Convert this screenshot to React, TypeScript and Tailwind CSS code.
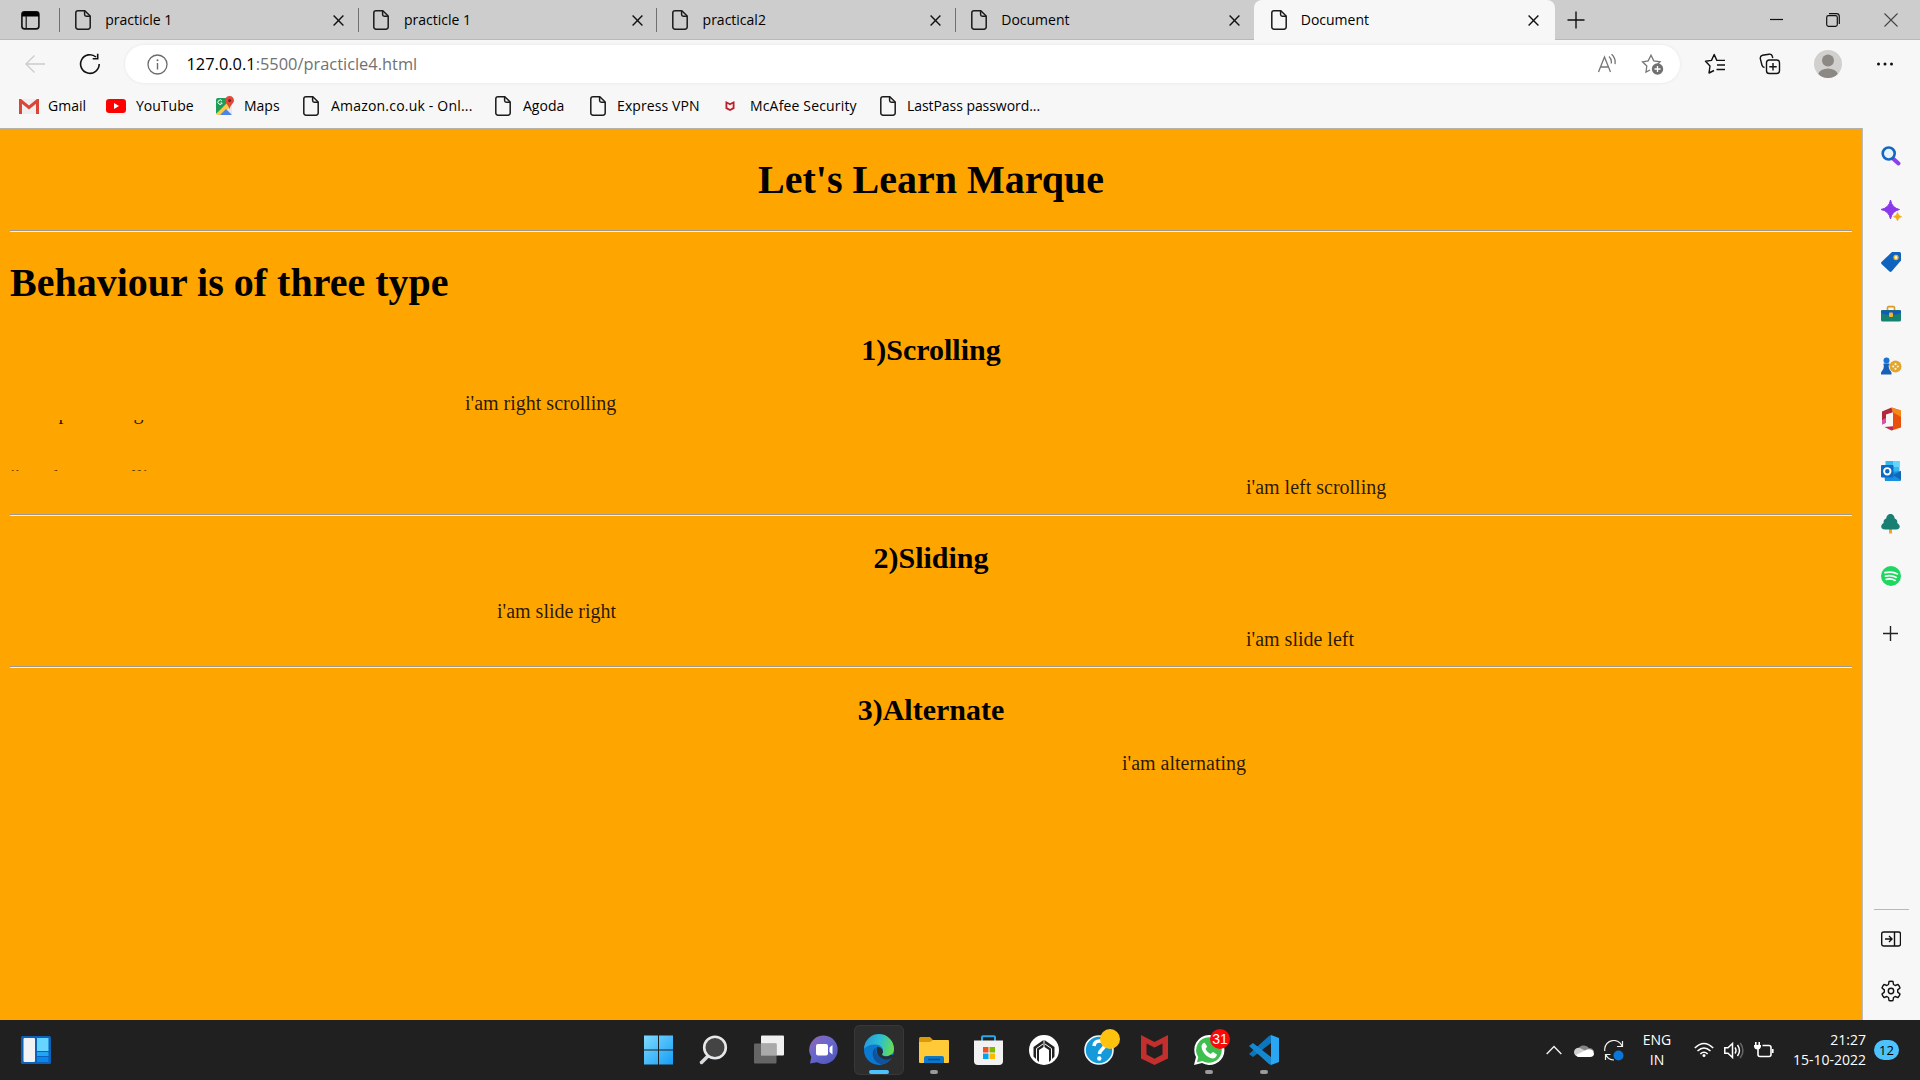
import React from "react";

type SvgProps = { size?: number; children: React.ReactNode; box?: string; className?: string };

const Svg = ({ size = 20, box = "0 0 20 20", children, className = "" }: SvgProps) => (
  <svg width={size} height={size} viewBox={box} fill="none" className={"shrink-0 " + className}>
    {children}
  </svg>
);

const PageIcon = () => (
  <svg width="16" height="20" viewBox="0 0 16 20" fill="none" stroke="#1b1b1b" strokeWidth="1.5" className="shrink-0">
    <path d="M3 .8h6.8L15.2 6v11a2.2 2.2 0 0 1-2.2 2.2H3A2.2 2.2 0 0 1 .8 17V3A2.2 2.2 0 0 1 3 .8Z" />
    <path d="M9.6 1v3.6c0 1 .7 1.7 1.7 1.7H15" />
  </svg>
);

const CloseIcon = () => (
  <svg width="11" height="11" viewBox="0 0 11 11" stroke="#111" strokeWidth="1.4" className="shrink-0">
    <path d="M.6.6l9.8 9.8M10.4.6L.6 10.4" />
  </svg>
);

const tabs = ["practicle 1", "practicle 1", "practical2", "Document"];

const TabStrip = () => (
  <div className="flex h-10 bg-[#cdcdcd] shadow-[inset_0_-1px_0_#b9b9b9]">
    <div className="flex w-[59px] items-center pl-[21px]">
      <Svg size={19} box="0 0 19 19">
        <rect x=".9" y=".9" width="17" height="17" rx="2.6" stroke="#111" strokeWidth="1.6" />
        <path d="M1 5.5V3.4A2.5 2.5 0 0 1 3.4 1h12.2A2.5 2.5 0 0 1 18 3.4v2.1Z" fill="#000" />
        <path d="M5.2 5v12.5" stroke="#222" strokeWidth="1.3" />
      </Svg>
    </div>
    {tabs.map((t, i) => (
      <div key={i} className="flex w-[298.7px] items-center">
        <div className="h-6 w-px bg-[#707070]" />
        <div className="ml-[14.7px]"><PageIcon /></div>
        <span className="ml-[14.5px] flex-1 text-sm leading-none">{t}</span>
        <div className="mr-[13.7px] mt-px"><CloseIcon /></div>
      </div>
    ))}
    <div className="flex w-[301px] items-center rounded-t-lg bg-[#f7f7f7] pl-[17px]">
      <PageIcon />
      <span className="ml-[14px] flex-1 text-sm leading-none">Document</span>
      <div className="mr-[16px] mt-px"><CloseIcon /></div>
    </div>
    <div className="flex flex-1 items-center pb-px">
      <Svg size={18} box="0 0 18 18" className="ml-[12px]">
        <path d="M9 .5v17M.5 9h17" stroke="#111" strokeWidth="1.4" />
      </Svg>
      <div className="flex-1" />
      <Svg size={13} box="0 0 13 13" className="mr-[43.5px]"><path d="M0 6.5h13" stroke="#111" strokeWidth="1.2" /></Svg>
      <Svg size={14} box="0 0 14 14" className="mr-[44px]">
        <rect x=".7" y="2.7" width="10.6" height="10.6" rx="1.8" stroke="#111" strokeWidth="1.2" />
        <path d="M3 .7h7.5a2.8 2.8 0 0 1 2.8 2.8V11" stroke="#111" strokeWidth="1.2" />
      </Svg>
      <Svg size={14} box="0 0 14 14" className="mr-[22px]"><path d="M.5.5l13 13M13.5.5l-13 13" stroke="#444" strokeWidth="1.1" /></Svg>
    </div>
  </div>
);

const AddressBar = () => (
  <div className="flex h-[48px] items-center">
    <Svg size={20} className="ml-[25px]"><path d="M20 10H1M9.500 1.500L1 10l8.500 8.500" stroke="#cbcbcb" strokeWidth="1.300" /></Svg>
    <Svg size={22} box="0 0 22 22" className="ml-[34px]">
      <path d="M20.200 11a9.300 9.300 0 1 1-3.200-7" stroke="#111" strokeWidth="1.600" />
      <path d="M18.700.800v5h-5" stroke="#111" strokeWidth="1.600" />
    </Svg>
    <div className="ml-[24px] flex h-[38px] w-[1555px] items-center rounded-full bg-white shadow-[0_0_3px_#e3e3e3]">
      <Svg size={21} box="0 0 21 21" className="ml-[22px]">
        <circle cx="10.500" cy="10.500" r="9.500" stroke="#6b6b6b" strokeWidth="1.300" />
        <path d="M10.500 9v6.500" stroke="#6b6b6b" strokeWidth="1.400" />
        <circle cx="10.500" cy="6.200" r="1" fill="#6b6b6b" />
      </Svg>
      <span className="ml-[18.5px] flex-1 text-[16.4px] leading-none text-[#717171]">
        <span className="text-black">127.0.0.1</span>:5500/practicle4.html
      </span>
      <Svg size={21} box="0 0 21 21" className="mr-[23px]">
        <path d="M1.500 18L7.500 3l6 15M3.500 13h8" stroke="#767676" strokeWidth="1.300" />
        <path d="M12 2.500q3 2.800 2.200 7M14.500 .200q4.500 4 3.500 10" stroke="#767676" strokeWidth="1.300" />
      </Svg>
      <Svg size={23} box="0 0 23 23" className="mr-[16px]">
        <path d="M9 17l-4 2 .8-6L1.500 8.800l5.700-1L10 2.200l2.800 5.600 6.200 1-2 2" stroke="#767676" strokeWidth="1.300" />
        <circle cx="16.500" cy="16" r="5.700" fill="#707070" />
        <path d="M16.500 13v6M13.500 16h6" stroke="#fff" strokeWidth="1.300" />
      </Svg>
    </div>
    <Svg size={22} box="0 0 22 22" className="ml-[24px]">
      <path d="M10 17.500L5 20l1-7L1.500 8.300l6-.900L10.200 1.500l2.600 5.900H21M13 12H21M12.500 16.500h8.500" stroke="#111" strokeWidth="1.400" strokeLinejoin="round" />
    </Svg>
    <Svg size={22} box="0 0 22 22" className="ml-[33px]">
      <path d="M5.500 14.500A3 3 0 0 1 3 12.300L1.300 5.600A3 3 0 0 1 3.500 2.300L10 1.200a3 3 0 0 1 3.400 2.300l.4 1.500" stroke="#111" strokeWidth="1.400" />
      <rect x="7.500" y="7" width="13" height="13.500" rx="2.800" stroke="#111" strokeWidth="1.400" />
      <path d="M14 10v7.500M10.300 13.700h7.400" stroke="#111" strokeWidth="1.400" />
    </Svg>
    <Svg size={28} box="0 0 28 28" className="ml-[33px]">
      <circle cx="14" cy="14" r="14" fill="#d2d0ce" />
      <circle cx="14" cy="10.500" r="6" fill="#8c8985" />
      <path d="M4.200 24a10 7 0 0 1 19.600 0 14 14 0 0 1-19.600 0Z" fill="#8c8985" />
    </Svg>
    <Svg size={18} box="0 0 18 18" className="ml-[34px]">
      <g fill="#111"><circle cx="2.500" cy="9" r="1.500" /><circle cx="9" cy="9" r="1.500" /><circle cx="15.500" cy="9" r="1.500" /></g>
    </Svg>
  </div>
);

const Gmail = () => (
  <svg width="20" height="15" viewBox="0 0 20 15" className="shrink-0">
    <path d="M2 0h16v15H2Z" fill="#eee" />
    <path d="M1.500 15V1.500L10 8.500l8.500-7V15" fill="none" stroke="#d94537" strokeWidth="3" />
  </svg>
);
const YouTube = () => (
  <svg width="20" height="16" viewBox="0 0 20 16" className="shrink-0">
    <rect y="1" width="20" height="14" rx="3.200" fill="#f00" /><path d="M8 5v6l5-3Z" fill="#fff" />
  </svg>
);
const Maps = () => (
  <svg width="20" height="20" viewBox="0 0 20 20" className="shrink-0">
    <rect x="1" y="2" width="16" height="17" rx="2" fill="#e8e8e8" />
    <path d="M1 4a2 2 0 0 1 2-2h10v6L1 18Z" fill="#1f9d58" />
    <path d="M1 18L12 7l3 4-8 8H3Z" fill="#fbcb43" />
    <path d="M5 19l6-6 6 6Z" fill="#4a85ee" />
    <path d="M14.500 0A4.300 4.300 0 0 0 10.200 4.500c0 3 3.500 4 4.300 9 .8-5 4.500-6 4.500-9A4.400 4.400 0 0 0 14.500 0Z" fill="#e04a3c" />
    <circle cx="14.600" cy="4.400" r="1.500" fill="#7b231b" />
    <path d="M7 5a2.200 2.200 0 1 0 .2 2H5.500" fill="none" stroke="#fff" strokeWidth="1" />
  </svg>
);
const Shield = ({ w, h, color }: { w: number; h: number; color: string }) => (
  <svg width={w} height={h} viewBox="0 0 27 30" className="shrink-0">
    <path d="M0 0L13.500 7 27 0V23.500L13.500 30 0 23.500ZM5.500 8.500V19.500L13.500 23.800 21.500 19.500V8.500L13.500 12.500Z" fill={color} fillRule="evenodd" />
  </svg>
);

const bookmarks = [
  { label: "Gmail", icon: <Gmail />, cls: "w-[87px]", gap: "ml-[9px]" },
  { label: "YouTube", icon: <YouTube />, cls: "w-[109px]", gap: "ml-[10px]" },
  { label: "Maps", icon: <Maps />, cls: "w-[88px]", gap: "ml-[9px]" },
  { label: "Amazon.co.uk - Onl...", icon: <PageIcon />, cls: "w-[192px]", gap: "ml-[12px] tracking-[0.2px]" },
  { label: "Agoda", icon: <PageIcon />, cls: "w-[95px]", gap: "ml-[12px]" },
  { label: "Express VPN", icon: <PageIcon />, cls: "w-[135px]", gap: "ml-[11px] tracking-[0.1px]" },
  { label: "McAfee Security", icon: <Shield w={10} h={10} color="#b8202a" />, cls: "w-[155px]", gap: "ml-[15px] tracking-[0.16px]" },
  { label: "LastPass password...", icon: <PageIcon />, cls: "w-[170px]", gap: "ml-[11px] tracking-[-0.06px]" },
];

const Bookmarks = () => (
  <div className="flex h-[40px] items-center pb-[4px] pl-[19px]">
    {bookmarks.map((b) => (
      <div key={b.label} className={"flex shrink-0 items-center whitespace-nowrap " + b.cls}>
        {b.icon}
        <span className={"text-sm leading-none " + b.gap}>{b.label}</span>
      </div>
    ))}
  </div>
);

const Rule = () => <div className="h-[2px] border-t border-[#9a9a9a] bg-[#eeeeee]" />;

const Content = () => (
  <main className="h-[892px] w-[1862px] overflow-hidden border-t border-[#b5b0a8] bg-[#ffa500] px-[10px] font-['Liberation_Serif',serif] text-black">
    <h1 className="mt-[28px] h-[46px] text-center text-[40px] font-bold leading-[46px]">Let's Learn Marque</h1>
    <div className="mt-[27px]"><Rule /></div>
    <h1 className="mt-[28px] h-[46px] text-[40px] font-bold leading-[46px]">Behaviour is of three type</h1>
    <h2 className="mt-[27px] h-[34px] text-center text-[30px] font-bold leading-[34px]">1)Scrolling</h2>
    <div className="mt-[25px] h-[28px] pl-[455px] text-[20px] leading-[23px] text-black/85">i'am right scrolling</div>
    <div className="flex h-[51px] flex-col justify-between overflow-hidden text-[20px] leading-[23px] text-black/85">
      <div className="-mt-[19px]">i'am up scrolling</div>
      <div className="-mb-[18px] text-black/65">i'am down scrolling</div>
    </div>
    <div className="mt-[5px] h-[23px] pl-[1236px] text-[20px] leading-[23px] text-black/85">i'am left scrolling</div>
    <div className="mt-[15px]"><Rule /></div>
    <h2 className="mt-[25px] h-[34px] text-center text-[30px] font-bold leading-[34px]">2)Sliding</h2>
    <div className="mt-[25px] h-[28px] pl-[487px] text-[20px] leading-[23px] text-black/85">i'am slide right</div>
    <div className="h-[38px] pl-[1236px] text-[20px] leading-[23px] text-black/85">i'am slide left</div>
    <Rule />
    <h2 className="mt-[25px] h-[34px] text-center text-[30px] font-bold leading-[34px]">3)Alternate</h2>
    <div className="mt-[25px] pl-[1112px] text-[20px] leading-[23px] text-black/85">i'am alternating</div>
  </main>
);

const sideIcons: { h: string; el: React.ReactNode }[] = [
  { h: "h-[54px]", el: <><path d="M12.500 13l5 4.500" stroke="#8a3ff0" strokeWidth="4" strokeLinecap="round" /><circle cx="7.700" cy="7.500" r="6" fill="#e7f3fb" stroke="#1466c0" strokeWidth="2.600" /></> },
  { h: "h-[53px]", el: <><path d="M9.500 0q1.500 8 9 9.500-7.500 1.500-9 9.500-1.500-8-9.500-9.500 8-1.500 9.500-9.500Z" fill="#8b38ec" stroke="#8b38ec" /><path d="M16.500 12.500q.8 3.800 4 4.200-3.200.5-4 4-.8-3.500-4-4 3.200-.4 4-4.200Z" fill="#f3ac10" stroke="#f3ac10" strokeWidth=".8" /></> },
  { h: "h-[51px]", el: <><path d="M11 0h7.500a1.500 1.500 0 0 1 1.500 1.500V8.500L10.500 19.500a1.500 1.500 0 0 1-2 0L.500 12a1.500 1.500 0 0 1 0-2Z" fill="#0f62bd" /><circle cx="15" cy="5.500" r="2" fill="#fff" stroke="#edb72d" strokeWidth="1.300" /></> },
  { h: "h-[54px]", el: <><path d="M6.500 6V3.700A1 1 0 0 1 7.500 2.600h5a1 1 0 0 1 1 1.100V6" stroke="#d99a20" strokeWidth="1.600" /><rect y="6" width="20" height="11.500" rx="1.500" fill="#15826f" /><path d="M0 6.500h20v2.500q-4 2-10 2T0 9Z" fill="#1557ba" /><rect x="8" y="8.500" width="4" height="4.500" rx="1" fill="#f4b52c" /></> },
  { h: "h-[52px]", el: <><circle cx="14.500" cy="9.500" r="6" fill="#e4a52c" /><g fill="#fff3d2"><circle cx="12.200" cy="9.500" r="1.100" /><circle cx="16.800" cy="9.500" r="1.100" /><circle cx="14.500" cy="7.200" r="1.100" /><circle cx="14.500" cy="11.800" r="1.100" /></g><circle cx="5.500" cy="3.500" r="3" fill="#1c72d4" /><path d="M2.500 6.500h6v2H7.500q0 4 3 7v2H0v-2q3-3 3-7H2.500Z" fill="#185fb8" /></> },
  { h: "h-[52px]", el: <><path d="M10.500-1.500L1 2.500v13l4-1.800V5.500l7-2.300Z" fill="#b3293c" /><path d="M1 11v4.500l4-1.800V9Z" fill="#d952a8" /><path d="M10.500-1.500L20 1.500v17l-9.500 3L12 17.500V3.200Z" fill="#e8500c" /><path d="M10.500-1.500L20 1.500V8L12 3.200Z" fill="#f58a1a" /><path d="M3.500 18l8.500-.8v3.500l-1.500.800Z" fill="#c7264e" /></> },
  { h: "h-[52px]", el: <><rect x="4.500" y="0" width="14" height="12" fill="#35b7f1" /><rect x="12" y="0" width="6.500" height="6" fill="#64d4fa" /><path d="M3 11.500L20 10v9a1 1 0 0 1-1 1H4Z" fill="#1690df" /><path d="M20 10v9l-8-5Z" fill="#1366b5" /><rect y="4" width="12.500" height="12.500" rx="1" fill="#0d6ac4" /><circle cx="6.300" cy="10.300" r="3.200" stroke="#fff" strokeWidth="1.900" /></> },
  { h: "h-[53px]", el: <><path d="M9.500 15v4.500" stroke="#eca52b" strokeWidth="3" /><path d="M9.500 0c3 0 4 2.500 4.200 4.500 2.200.8 3 2.500 2.500 4.500 3.800 2.200 3.300 6.500-1 6.500H4C-.500 15.500-1 11 2.700 9 2.200 7 3 5.300 5.200 4.500 5.500 2.500 6.500 0 9.500 0Z" fill="#187f72" /></> },
  { h: "h-[52px]", el: <><circle cx="10" cy="10" r="10" fill="#1ed760" /><path d="M4 6.700q7-1.700 12.500 1.200M4.500 10.200q6-1.400 10.800 1.200M5.200 13.300q5-1.100 9 1.100" stroke="#fff" strokeWidth="1.700" strokeLinecap="round" /></> },
  { h: "h-[63px]", el: <path d="M9.500 2v15M2 9.500h15" stroke="#222" strokeWidth="1.400" /> },
];

const Sidebar = () => (
  <aside className="flex w-[58px] flex-col items-center border-l border-[#bdbdbd] bg-[#f7f7f7] pr-px pt-px">
    {sideIcons.map((s, i) => (
      <div key={i} className={"flex w-[20px] shrink-0 items-center justify-center " + s.h}>
        <Svg className="overflow-visible">{s.el}</Svg>
      </div>
    ))}
    <div className="flex-1" />
    <div className="h-px w-[35px] bg-[#b9b9b9]" />
    <div className="mt-[19px]">
      <Svg><rect x=".700" y="3" width="18.800" height="14" rx="2" stroke="#111" strokeWidth="1.400" /><path d="M13.500 3v14M4 10h7M8 7l3 3-3 3" stroke="#111" strokeWidth="1.400" /></Svg>
    </div>
    <div className="mt-[31px] mb-[18px]">
      <svg width="22" height="22" viewBox="0 0 22 22" fill="none" stroke="#111" strokeWidth="1.400" strokeLinejoin="round">
        <circle cx="11" cy="11" r="2.700" />
        <path d="M9 1.500Q11 .900 13 1.500L13.500 4.500 15.200 5.500 18 4.400Q19.500 6 20 8L17.700 9.900V12.100L20 14Q19.500 16 18 17.600L15.200 16.500 13.500 17.500 13 20.500Q11 21.100 9 20.500L8.500 17.500 6.800 16.500 4 17.600Q2.500 16 2 14L4.300 12.100V9.900L2 8Q2.500 6 4 4.400L6.800 5.500 8.500 4.500Z" />
      </svg>
    </div>
  </aside>
);

const S = ({ children }: { children: React.ReactNode }) => (
  <svg width="30" height="30" viewBox="0 0 30 30" fill="none" className="overflow-visible">{children}</svg>
);

const apps: { el: React.ReactNode; state?: "active" | "open"; badge?: React.ReactNode }[] = [
  { el: <S><defs><linearGradient id="win" gradientUnits="userSpaceOnUse" x1="0" y1="0" x2="30" y2="30"><stop stopColor="#7fdcff" /><stop offset="1" stopColor="#129bf5" /></linearGradient></defs><path d="M0 .500h14v14H0ZM15 .500h14v14H15ZM0 15.500h14v14H0ZM15 15.500h14v14H15Z" fill="url(#win)" /></S> },
  { el: <S><path d="M9 21L2.500 27.500" stroke="#d8dadb" strokeWidth="3.500" strokeLinecap="round" /><circle cx="16" cy="12.500" r="10.800" fill="#444" stroke="#e6e8e9" strokeWidth="2.600" /></S> },
  { el: <S><rect x="7" y=".500" width="23" height="20" rx="1" fill="#f0f0f0" /><rect y="8.500" width="22.500" height="20" rx="1" fill="#777" fillOpacity=".800" /><path d="M7 8.500h15.500v12H7Z" fill="#aaa" /></S> },
  { el: <S><defs><linearGradient id="chat" x1="0" y1="0" x2=".8" y2="1"><stop stopColor="#9565b4" /><stop offset=".5" stopColor="#6668cc" /><stop offset="1" stopColor="#5356c0" /></linearGradient></defs><path d="M15 .500a14.200 14.200 0 1 1-7 26.800L1 28.500l1.300-6.500A14.200 14.200 0 0 1 15 .500Z" fill="url(#chat)" /><rect x="7" y="9" width="12" height="11.500" rx="2" fill="#fff" /><path d="M20.500 12.500l3-2.500v9.500l-3-2.500Z" fill="#fff" /></S> },
  { state: "active", el: <S><defs><linearGradient id="edgeTop" x1="0" y1=".4" x2="1" y2=".6"><stop stopColor="#239bdb" /><stop offset=".5" stopColor="#2dbfd2" /><stop offset="1" stopColor="#69dd4c" /></linearGradient></defs><circle cx="15" cy="15" r="15" fill="#0b78d1" /><path d="M0 14A15 15 0 0 1 30 14c0 5-4 7-7.500 7-4 0-6-1.500-4-3.500 2-3-1-8-7.500-8-5 0-9 2-11 4.500Z" fill="url(#edgeTop)" /><path d="M11.500 12.500C5 18 11 31 20 28.800c4-1.300 6.500-3.800 7.500-6.300C20 26.500 11 22 11.500 12.500Z" fill="#10529c" /><path d="M13 12a6 6 0 0 1 6 4.500c.4 1.800-1.500 2.500-.800 3.500 1.500 2 6 2 9.300-.400l3 1.400-3.300 2.200C20 27.500 10.500 21 13 12Z" fill="#262d35" /></S> },
  { state: "open", el: <S><path d="M0 3.500A1.500 1.500 0 0 1 1.500 2H11l3 3v6H0Z" fill="#dc9a08" /><path d="M0 7h11l3-2h15a1 1 0 0 1 1 1v21a1 1 0 0 1-1 1H1a1 1 0 0 1-1-1Z" fill="#ffc938" /><path d="M5 28v-5a2 2 0 0 1 2-2h16a2 2 0 0 1 2 2v5Z" fill="#0d78c9" /><path d="M9 24.500h12" stroke="#094d87" strokeWidth="1.500" /></S> },
  { el: <S><path d="M8 6V2.200a1 1 0 0 1 1-1h11a1 1 0 0 1 1 1V6" stroke="#2ba9e7" strokeWidth="2" /><path d="M0 5.500h29V26a4 4 0 0 1-4 4H4a4 4 0 0 1-4-4Z" fill="#f2f2f2" /><path d="M9 12h5.500v5.500H9Z" fill="#f25022" /><path d="M15.500 12H21v5.500h-5.500Z" fill="#7fba00" /><path d="M9 18.500h5.500V24H9Z" fill="#00a4ef" /><path d="M15.500 18.500H21V24h-5.500Z" fill="#ffb900" /></S> },
  { el: <S><circle cx="15" cy="15" r="15" fill="#fff" /><path d="M10 27V15l4.500-3V5L4.500 12v9.500M20 27V15l-4.500-3V5l10 7v9.500" fill="#222" /><path d="M7.500 26V13.500L14 9M22.500 26V13.500L16 9" stroke="#fff" strokeWidth="1" /><path d="M11.500 27V16L15 13.500 18.500 16v11Z" fill="#fff" /></S> },
  { el: <S><circle cx="15" cy="15" r="14" fill="#149adb" stroke="#f0f7fb" strokeWidth="1.600" /><path d="M10 11q.5-5 5.500-5t5 4.500c0 3.500-5 4-5 8.500" stroke="#fff" strokeWidth="3.500" /><circle cx="15.300" cy="23.500" r="2.200" fill="#fff" /></S>, badge: <div className="absolute -top-[6px] left-[16px] h-[20px] w-[20px] rounded-full bg-[#ffc20e]" /> },
  { el: <Shield w={27} h={30} color="#c22f2d" /> },
  { state: "open", el: <S><path d="M15 0a15 15 0 1 1-7 28L0 30l2-8A15 15 0 0 1 15 0Z" fill="#fff" /><path d="M15 2.200A12.800 12.800 0 1 1 8.500 26L3 27.300 4.300 22A12.800 12.800 0 0 1 15 2.200Z" fill="#3fbf4f" /><path d="M10.500 7.500l2.700 4-1.700 2.500q2 4 5 5l2.500-2 4 2.500q-1 4-4.500 4C13 22.500 7.500 17 7.500 11q.5-3 3-3.500Z" fill="#fff" /></S>, badge: <div className="absolute -top-[6px] left-[16px] flex h-[20px] w-[20px] items-center justify-center rounded-full bg-[#fb0909] font-['Liberation_Sans',sans-serif] text-sm leading-none text-white">31</div> },
  { state: "open", el: <S><path d="M22 0l8 3v24l-8 3Z" fill="#2aa7f2" /><path d="M22 0v8L4 22 0 19 20 1Z" fill="#0d75bd" /><path d="M22 30v-8L4 8 0 11l20 18Z" fill="#1489d2" /></S> },
];

const Tray = () => (
  <div className="flex h-full items-center text-white">
    <svg width="16" height="10" viewBox="0 0 16 10" fill="none" stroke="#eee" strokeWidth="1.500"><path d="M.700 9L8 1.500 15.300 9" /></svg>
    <svg width="20" height="14" viewBox="0 0 20 14" className="ml-[12px]"><path d="M4 7a6 5.500 0 0 1 11-2c3 0 5 2 5 4L8 13Z" fill="#858585" /><path d="M0 9a4.500 4.500 0 0 1 6-4l8 4-9 5Q0 13 0 9Z" fill="#cfcfcf" /><path d="M2 12l11-5.500q6-1 7 4 0 3.300-4 3.500H5q-2 0-3-2Z" fill="#fff" /></svg>
    <svg width="20" height="21" viewBox="0 0 20 21" fill="none" className="ml-[10px]"><path d="M.700 11V9A9 9 0 0 1 18 6M18.500 1v5.500H13M10 20a9 9 0 0 1-8-5M1.500 20v-5.500h5" stroke="#eee" strokeWidth="1.200" /><circle cx="14.500" cy="15.500" r="5" fill="#0877db" /></svg>
    <div className="ml-[18px] w-[30px] text-center text-sm leading-[20px]">ENG<br />IN</div>
    <svg width="20" height="16" viewBox="0 0 20 16" fill="none" stroke="#fff" strokeWidth="1.600" className="ml-[22px]"><path d="M.800 6q9.200-9 18.400 0M3.500 9q6.500-6 13 0M6.300 12q3.700-3.500 7.400 0" /><circle cx="10" cy="13.500" r="1.500" fill="#fff" stroke="none" /></svg>
    <svg width="20" height="17" viewBox="0 0 20 17" fill="none" stroke="#fff" strokeWidth="1.500" className="ml-[10px]"><path d="M.800 5.700H4L8.500 1.500v14L4 11.300H.800ZM11 5.500q2 3 0 6M13.500 3q4 5.500 0 11" /><path d="M16.200 1q5.500 7.500 0 15" stroke="#666" /></svg>
    <svg width="20" height="16" viewBox="0 0 20 16" fill="none" stroke="#fff" strokeWidth="1.600" className="ml-[10px]"><path d="M8.500 3.500h6.500a2 2 0 0 1 2 2v7a2 2 0 0 1-2 2H6a2 2 0 0 1-2-2V6" /><path d="M0 3h7v1.500A3.500 3.500 0 0 1 3.500 7.500 3.500 3.500 0 0 1 0 4.500Z" fill="#fff" stroke="none" /><path d="M1.800 3V0M5.200 3V0M18.800 7v4" /></svg>
    <div className="ml-[12px] w-[80px] whitespace-nowrap text-right text-sm leading-[20px]"><div>21:27</div><div className="flex justify-end">15-10-2022</div></div>
    <div className="ml-[8px] mr-[21px] flex h-[20px] w-[25px] items-center justify-center rounded-full bg-[#4cc2ff] text-[13px] leading-none text-black">12</div>
  </div>
);

const Taskbar = () => (
  <footer className="flex h-[60px] items-center bg-[#202020]">
    <svg width="30" height="28" viewBox="0 0 30 28" className="ml-[21px]">
      <rect width="30" height="28" rx="1.500" fill="#0c61b8" /><rect x="2.500" y="2" width="11.500" height="24" rx="1" fill="#f2f2f2" /><path d="M16 2h11.500v13H16Z" fill="#66d5ff" /><path d="M16 16h11.500v4H16Z" fill="#22a5f5" /><path d="M16 21h11.500v5H16Z" fill="#0a86ed" />
    </svg>
    <div className="ml-[583px] flex gap-[5px]">
      {apps.map((a, i) => (
        <div key={i} className={"relative flex h-[50px] w-[50px] flex-col items-center rounded-md pt-[10px] " + (a.state === "active" ? "bg-[#2d2d2d] shadow-[inset_0_0_0_1px_#383838]" : "")}>
          <div className="relative flex h-[30px] w-[30px] justify-center">{a.el}{a.badge}</div>
          {a.state === "active" && <div className="mt-[5px] h-1 w-5 rounded-full bg-[#4cc2ff]" />}
          {a.state === "open" && <div className="mt-[5px] h-1 w-2 rounded-full bg-[#9a9a9a]" />}
        </div>
      ))}
    </div>
    <div className="flex-1" />
    <Tray />
  </footer>
);

export default function App() {
  return (
    <div className="flex h-[1080px] w-[1920px] flex-col overflow-hidden bg-[#f7f7f7] font-['Open_Sans',sans-serif] text-black">
      <TabStrip />
      <AddressBar />
      <Bookmarks />
      <div className="flex h-[892px]">
        <Content />
        <Sidebar />
      </div>
      <Taskbar />
    </div>
  );
}
